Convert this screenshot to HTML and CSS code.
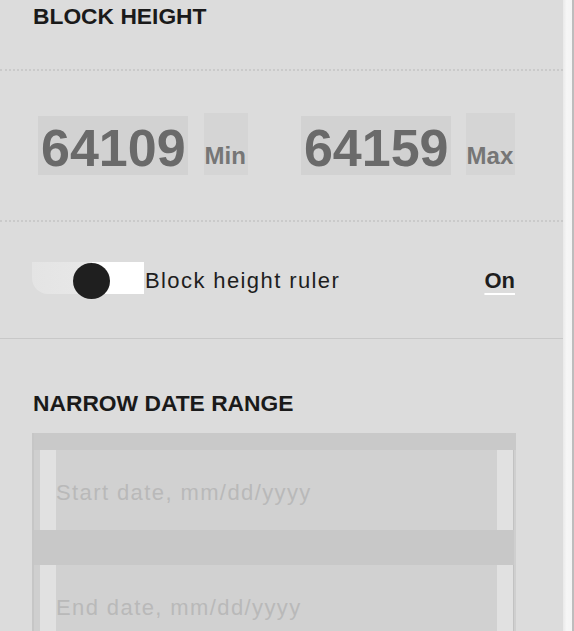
FILE: index.html
```html
<!DOCTYPE html>
<html lang="en">
<head>
<meta charset="utf-8">
<title>Filters</title>
<link rel="stylesheet" href="styles.css">
</head>
<body>
<div class="page">
  <main class="panel">
    <h2 class="heading heading-first">BLOCK HEIGHT</h2>
    <hr class="rule-dotted rule-top">
    <div class="range">
      <div class="group">
        <span class="num">64109</span>
        <span class="unit">Min</span>
      </div>
      <div class="group">
        <span class="num">64159</span>
        <span class="unit">Max</span>
      </div>
    </div>
    <hr class="rule-dotted rule-bottom">
    <div class="toggle-row">
      <span class="toggle"><span class="knob"></span></span>
      <span class="label">Block height ruler</span>
      <span class="state">On</span>
    </div>
    <hr class="rule-solid">
    <h2 class="heading heading-second">NARROW DATE RANGE</h2>
    <div class="dates">
      <div class="dates-top"></div>
      <div class="field"><span class="placeholder">Start date, mm/dd/yyyy</span></div>
      <div class="dates-sep"></div>
      <div class="field"><span class="placeholder">End date, mm/dd/yyyy</span></div>
    </div>
  </main>
  <div class="scrollbar"></div>
</div>
</body>
</html>
```

FILE: styles.css
```css
html, body {
  margin: 0;
  padding: 0;
  height: 631px;
  overflow: hidden;
  background: #dcdcdc;
}

.page {
  display: flex;
  height: 631px;
  font-family: "Liberation Sans", Arial, sans-serif;
}

.panel {
  width: 563px;
  flex: none;
  background: #dcdcdc;
  padding-top: 3px;
  box-sizing: border-box;
}

.scrollbar {
  flex: 1;
  background: linear-gradient(to right, #e9e9e9, #f6f6f6 40%, #f4f4f4);
  border-right: 2px solid #bdbdbd;
}

.heading {
  margin: 0;
  padding-left: 33px;
  font-size: 22.8px;
  line-height: 26px;
  font-weight: bold;
  color: #1a1a1a;
}

.heading-second {
  margin-top: 51px;
}

.rule-dotted {
  border: 0;
  border-top: 2px dotted #cacaca;
  height: 0;
  margin: 0;
}

.rule-top {
  margin-top: 40px;
}

.rule-bottom {
  margin-top: 45px;
}

.rule-solid {
  border: 0;
  border-top: 1px solid #c8c8c8;
  height: 0;
  margin: 41px 0 0;
}

.range {
  display: flex;
  align-items: flex-end;
  gap: 53px;
  padding-left: 38px;
  margin-top: 42px;
}

.group {
  display: flex;
  align-items: flex-end;
  gap: 16px;
}

.group + .group {
  gap: 15px;
}

.num {
  display: block;
  background: #d2d2d2;
  color: #6a6a6a;
  font-weight: bold;
  font-size: 52px;
  line-height: 52px;
  padding: 6px 2px 1px 3px;
}

.unit {
  display: block;
  background: #d5d5d5;
  color: #767676;
  font-weight: bold;
  font-size: 24px;
  line-height: 24px;
  padding: 31px 2px 7px 1px;
}

.toggle-row {
  display: flex;
  align-items: flex-start;
  padding-left: 32px;
  padding-right: 48px;
  margin-top: 40px;
}

.toggle {
  position: relative;
  display: block;
  width: 112px;
  height: 32px;
  flex: none;
  background: linear-gradient(to right, #e4e4e4 0, #e8e8e8 60px, #ffffff 60px);
  border-bottom-left-radius: 16px;
}

.knob {
  position: absolute;
  left: 41px;
  top: 1px;
  width: 37px;
  height: 36px;
  border-radius: 50%;
  background: #1f1f1f;
}

.label {
  margin-left: 1px;
  padding-top: 3px;
  font-size: 22px;
  line-height: 32px;
  letter-spacing: 1.4px;
  color: #1e1e1e;
}

.state {
  margin-left: auto;
  padding-top: 3px;
  font-size: 22px;
  line-height: 32px;
  font-weight: bold;
  color: #1e1e1e;
  text-decoration: underline;
  text-decoration-color: #ffffff;
  text-decoration-thickness: 2px;
  text-underline-offset: 5px;
}

.dates {
  margin: 17px 0 0 32px;
  width: 484px;
  background: #cfcfcf;
  border-left: 2px solid #c6c6c6;
  box-sizing: border-box;
  padding: 0 2px 0 6px;
}

.dates-top {
  height: 17px;
  margin: 0 -2px 0 -6px;
  background: #c9c9c9;
}

.dates-sep {
  height: 35px;
  margin-left: -6px;
  background: #c8c8c8;
}

.field {
  height: 80px;
  box-sizing: border-box;
  padding: 6px 16px 0 16px;
  background: linear-gradient(to right, #e1e1e1 0 16px, #d1d1d1 16px calc(100% - 16px), #e1e1e1 calc(100% - 16px));
  border-right: 1px solid #c2c2c2;
}

.placeholder {
  display: block;
  font-size: 22px;
  line-height: 74px;
  letter-spacing: 1.4px;
  color: #b9b9b9;
  white-space: nowrap;
}
```
